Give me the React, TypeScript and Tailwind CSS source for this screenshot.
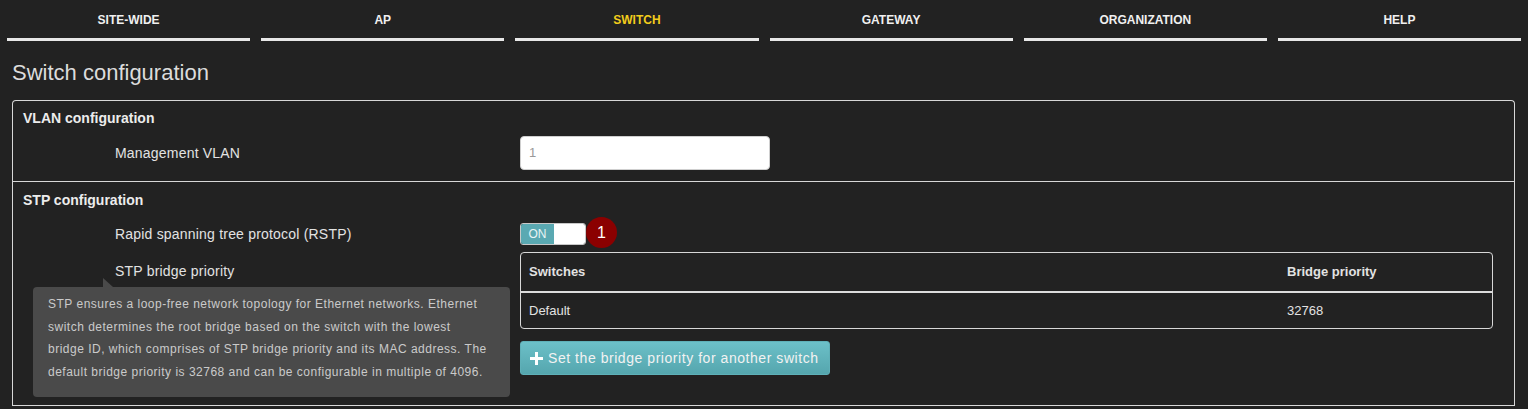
import React from 'react';

const tabs = ['SITE-WIDE', 'AP', 'SWITCH', 'GATEWAY', 'ORGANIZATION', 'HELP'];

const tipLines = [
  'STP ensures a loop-free network topology for Ethernet networks. Ethernet',
  'switch determines the root bridge based on the switch with the lowest',
  'bridge ID, which comprises of STP bridge priority and its MAC address. The',
  'default bridge priority is 32768 and can be configurable in multiple of 4096.',
];

const App: React.FC = () => {
  return (
    <div className="w-[1528px] h-[409px] overflow-hidden bg-[#222222] text-[#e2e2e2] font-['Liberation_Sans',Arial,sans-serif]">
      {/* Tabs */}
      <div className="flex gap-[11px] px-[7px]">
        {tabs.map((t) => (
          <div
            key={t}
            className={`flex-1 h-[41px] flex items-center justify-center pt-[2px] border-b-[3px] border-[#e8e8e8] text-[12px] font-bold ${
              t === 'SWITCH' ? 'text-[#f2cc1c]' : 'text-[#f0f0f0]'
            }`}
          >
            {t}
          </div>
        ))}
      </div>

      {/* Title */}
      <div className="h-[59px] flex items-center pl-[12px] pt-[4px] text-[22px] text-[#dcdcdc]">
        Switch configuration
      </div>

      {/* Config box */}
      <div className="ml-[12px] mr-[13px] border border-b-0 border-[#d8d8d8] rounded-t-[4px]">
        {/* VLAN */}
        <div className="pb-[11px] border-b border-[#d8d8d8]">
          <div className="h-[35px] flex items-center px-[10px] text-[14px] font-semibold text-[#ececec]">
            VLAN configuration
          </div>
          <div className="flex items-center h-[34px]">
            <div className="w-[507px] pl-[102px] text-[14px] tracking-[0.2px]">Management VLAN</div>
            <div className="w-[250px] h-[34px] bg-white rounded-[4px] border border-[#cfcfcf] flex items-center px-[8px] text-[13px] text-[#999]">
              1
            </div>
          </div>
        </div>

        {/* STP */}
        <div className="relative pb-[30px] border-b border-[#d8d8d8]">
          <div className="h-[36px] flex items-center px-[10px] text-[14px] font-semibold text-[#ececec]">
            STP configuration
          </div>
          <div className="flex items-center h-[32px]">
            <div className="w-[507px] pl-[102px] text-[14px] tracking-[0.2px]">Rapid spanning tree protocol (RSTP)</div>
            <div className="flex items-center">
              <div className="w-[66px] h-[22px] flex rounded-[3px] border border-[#c8c8c8] overflow-hidden">
                <div className="w-[33px] bg-[#5aa9b2] text-[12px] text-[#e8f4f5] flex items-center justify-center">
                  ON
                </div>
                <div className="flex-1 bg-white" />
              </div>
              <div className="-mt-[3px] w-[31px] h-[31px] rounded-full bg-[#8b0000] text-white text-[16px] flex items-center justify-center">
                1
              </div>
            </div>
          </div>
          <div className="flex pt-[2px]">
            <div className="w-[507px] pl-[102px] pt-[9px] text-[14px] tracking-[0.2px]">STP bridge priority</div>
            <div>
              <div className="w-[973px] border border-[#d8d8d8] rounded-[4px] text-[13px]">
                <div className="grid grid-cols-[758px_1fr] h-[40px] items-center px-[8px] border-b-2 border-[#dcdcdc] font-semibold">
                  <div>Switches</div>
                  <div>Bridge priority</div>
                </div>
                <div className="grid grid-cols-[758px_1fr] h-[35px] items-center px-[8px]">
                  <div>Default</div>
                  <div>32768</div>
                </div>
              </div>
              <button className="mt-[12px] h-[34px] pl-[9px] pr-[10px] flex items-center gap-[5px] rounded-[3px] border border-[#5fb0b8] bg-gradient-to-b from-[#6cc0c8] to-[#55a6ae] text-[14px] tracking-[0.55px] text-[#f2f2f2]">
                <svg width="13" height="13" viewBox="0 0 13 13">
                  <path d="M5 0h3v5h5v3H8v5H5V8H0V5h5z" fill="#ffffff" />
                </svg>
                Set the bridge priority for another switch
              </button>
            </div>
          </div>

          {/* Tooltip */}
          <div className="absolute left-[20px] top-[96px] w-[477px]">
            <svg width="10" height="9" viewBox="0 0 10 9" className="ml-[70px] block">
              <polygon points="0,0 10,9 0,9" fill="#4a4a4a" />
            </svg>
            <div className="bg-[#4a4a4a] rounded-[4px] px-[15px] pt-[6px] pb-[14px] text-[12px] leading-[22.5px] tracking-[0.5px] text-[#cacaca]">
              {tipLines.map((l) => (
                <div key={l} className="whitespace-nowrap">
                  {l}
                </div>
              ))}
            </div>
          </div>
        </div>
      </div>
    </div>
  );
};

export default App;
